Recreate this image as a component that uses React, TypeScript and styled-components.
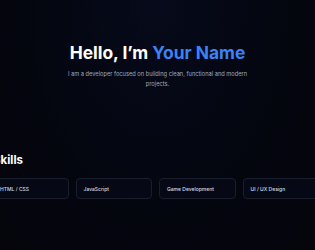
import React from "react";
import styled, { createGlobalStyle } from "styled-components";

const Global = createGlobalStyle`
  html, body { margin: 0; padding: 0; }
  body {
    width: 315px;
    height: 250px;
    overflow: hidden;
    background: radial-gradient(ellipse at 50% 0%, #060a1a 0%, #04060f 60%, #05050b 100%);
    font-family: Inter, "Noto Sans", sans-serif;
    color: #ffffff;
  }
`;

const Page = styled.main`
  width: 315px;
  height: 250px;
  display: flex;
  flex-direction: column;
`;

const Hero = styled.section`
  padding-top: 42px;
  display: flex;
  flex-direction: column;
  align-items: center;
  text-align: center;
`;

const Title = styled.h1`
  margin: 0;
  font-size: 17.4px;
  line-height: 21px;
  font-weight: 700;
  color: #ffffff;
`;

const Accent = styled.span`
  color: #3b82f6;
`;

const Lead = styled.p`
  margin: 6px 0 0;
  width: 186px;
  font-size: 5.7px;
  line-height: 10px;
  color: #a3a9b6;
`;

const Skills = styled.section`
  margin: 64px 0 0 -8px;
  width: 327px;
`;

const Heading = styled.h2`
  margin: 0 0 0 1px;
  font-size: 11.5px;
  line-height: 14px;
  font-weight: 700;
  color: #ffffff;
`;

const Grid = styled.div`
  margin-top: 11px;
  display: grid;
  grid-template-columns: repeat(4, 1fr);
  gap: 7px;
`;

const Card = styled.div`
  height: 21px;
  box-sizing: border-box;
  border: 1px solid #1a1f2d;
  border-radius: 4px;
  background: #060915;
  display: flex;
  align-items: center;
  padding: 0 7px;
  font-size: 5px;
  font-weight: 500;
  color: #d7dae0;
  white-space: nowrap;
`;

const skills = ["HTML / CSS", "JavaScript", "Game Development", "UI / UX Design"];

export default function App() {
  return (
    <>
      <Global />
      <Page>
        <Hero>
          <Title>
            Hello, I’m <Accent>Your Name</Accent>
          </Title>
          <Lead>
            I am a developer focused on building clean, functional and modern projects.
          </Lead>
        </Hero>
        <Skills>
          <Heading>Skills</Heading>
          <Grid>
            {skills.map((s) => (
              <Card key={s}>{s}</Card>
            ))}
          </Grid>
        </Skills>
      </Page>
    </>
  );
}
